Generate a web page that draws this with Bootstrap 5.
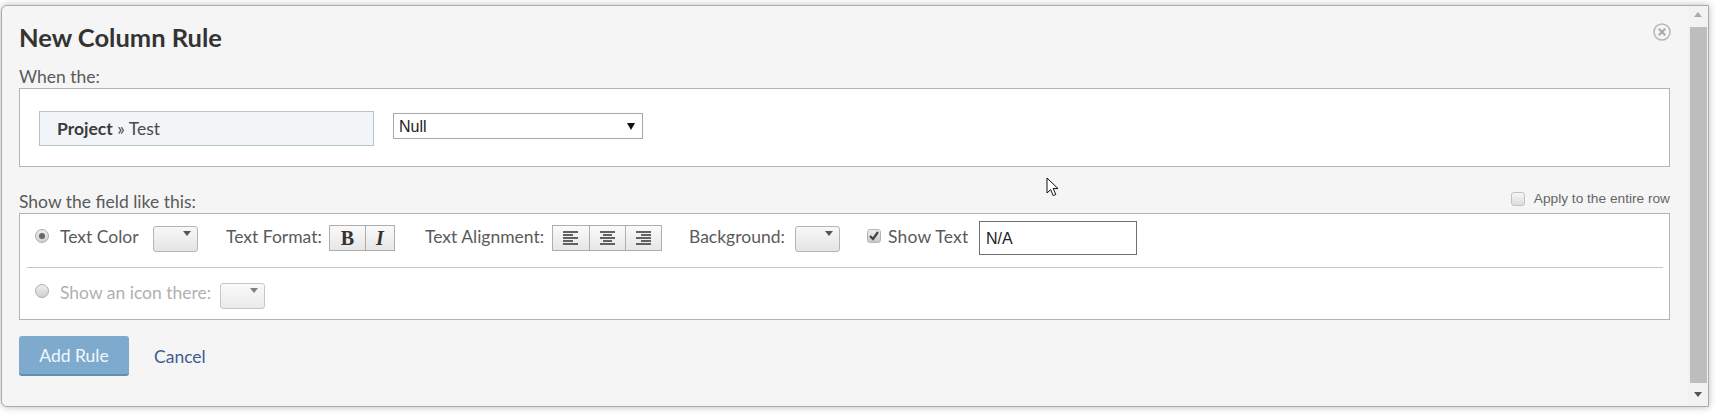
<!DOCTYPE html>
<html lang="en">
<head>
<meta charset="utf-8">
<title>New Column Rule</title>
<link rel="stylesheet" href="https://cdn.jsdelivr.net/npm/bootstrap@5.3.0/dist/css/bootstrap.min.css">
<style>
html, body { width: 1730px; height: 415px; overflow: hidden; background: #fff; }
body { font-family: Lato, "Liberation Sans", sans-serif; font-size: 17.5px; color: #5a5a5a; }
.rule-shell { width: 1708px; height: 402px; margin: 5px 0 0 1px; background: #f5f5f5; border: 1px solid #ababab; border-radius: 6px 0 0 6px; box-shadow: 0 0 7px rgba(0,0,0,.28); position: relative; }
.rule-main { width: 1687px; padding: 0 19px 0 17px; }
.rule-title { font-family: Lato, sans-serif; font-size: 25.5px; font-weight: 700; line-height: 30px; color: #333; margin: 16px 0 0; }
.rule-label { line-height: 20px; margin: 0; }
.rule-label-when { margin-top: 15px; margin-bottom: 1px; }
.rule-panel { background: #fff; border: 1px solid #b4b4b4; }
.rule-panel-when { height: 79px; padding: 22px 0 0 19px; gap: 19px; }
.field-chip { width: 335px; height: 35px; padding-left: 17px; background: #f2f5f7; border: 1px solid #b6c3c9; line-height: 33px; color: #4a4a4a; }
.field-chip b { color: #3b3b3b; }
.null-select { width: 250px; height: 26px; margin-top: 2px; padding: 0 0 0 5px; font: 16px "Liberation Sans", sans-serif; color: #222; border: 1px solid #a9a9a9; border-radius: 0; background: #fff url("data:image/svg+xml,%3Csvg xmlns='http://www.w3.org/2000/svg' width='8' height='8'%3E%3Cpath d='M0 1h8L4 8z' fill='%23111'/%3E%3C/svg%3E") no-repeat right 7px center; appearance: none; }
.show-head { margin-top: 24px; height: 22px; }
.show-head .rule-label { line-height: 22px; margin-top: -1px; }
.apply-wrap { font: 13.7px "Liberation Sans", sans-serif; color: #666; gap: 9px; margin-top: -7px; }
.tick { width: 14px; height: 14px; flex: none; border: 1px solid #c2c2c2; border-radius: 3px; background: linear-gradient(#f6f6f6, #dcdcdc); display: block; position: relative; }
.tick-on { border-color: #b5b5b5; background: linear-gradient(#eee, #c9c9c9); }
.tick-on svg { display: block; }
.dot { width: 14px; height: 14px; flex: none; border: 1px solid #adadad; border-radius: 50%; background: linear-gradient(#eee, #d0d0d0); display: flex; align-items: center; justify-content: center; }
.dot i { width: 6px; height: 6px; border-radius: 50%; background: #666; }
.rule-panel-show { height: 107px; padding: 0 6px 0 7px; }
.show-row-one { height: 54px; padding-bottom: 6px; border-bottom: 1px solid #c6c6c6; }
.show-row-two { height: 51px; }
.slot-radio { margin: -3px 0 0 8px; }
.show-row-two .slot-radio { margin-top: -6px; }
.swatch-btn { width: 45px; height: 26px; margin-top: 2px; padding: 3px 6px 0 0; background: linear-gradient(#f8f8f8, #e4e4e4); border: 1px solid #b5b5b5; border-radius: 3px; display: flex; justify-content: flex-end; align-items: flex-start; }
.swatch-btn i { width: 0; height: 0; border: 4px solid transparent; border-bottom: 0; border-top: 5px solid #555; margin-top: 1px; }
.swatch-off { opacity: .75; margin-top: 4px; }
.tool-group { display: flex; height: 26px; border: 1px solid #aeaeae; background: linear-gradient(#fafafa, #e6e6e6); }
.tool-btn { width: 36px; display: flex; align-items: center; justify-content: center; border-left: 1px solid #aeaeae; color: #333; }
.tool-btn:first-child { border-left: 0; }
.glyph-serif { font: 700 20px/1 "Liberation Serif", serif; }
.tool-fmt .tool-btn:first-child { width: 35px; }
.tool-fmt .tool-btn:nth-child(2) { width: 29px; }
.gap-text-color { margin-left: 11px; width: 93px; }
.gap-format { margin-left: 28px; width: 103px; }
.gap-align { margin-left: 30px; width: 127px; }
.gap-bg { margin-left: 27px; width: 106px; }
.gap-showtext { margin-left: 27px; }
.muted-line { color: #b0b0b0; }
.showtext-label { margin-left: 7px; width: 91px; letter-spacing: .2px; }
.icon-label { margin-left: 11px; width: 160px; }
.na-input { width: 158px; height: 34px; padding: 2px 6px 0; font: 16px "Liberation Sans", sans-serif; color: #222; border: 1px solid #707070; border-radius: 0; margin-top: 1px; }
.add-btn { width: 110px; height: 40px; padding: 2px 0 0; margin-top: 16px; font-family: Lato, sans-serif; font-size: 17.5px; color: #f2f7fb; background: #7eabcd; border: 0; border-bottom: 2px solid #5f8fb0; border-radius: 3px; }
.cancel-link { margin: 17px 0 0 25px; line-height: 40px; color: #3f5b94; text-decoration: none; }
.close-mark { position: absolute; left: 1650px; top: 16px; }
.fake-scroll { position: absolute; right: 0; top: 0; bottom: 0; width: 20px; background: #f2f2f2; }
.fake-scroll b { position: absolute; left: 2px; right: 1px; top: 21px; bottom: 23px; background: #bdbdbd; }
.fake-scroll i { position: absolute; left: 6px; width: 0; height: 0; border: 4.5px solid transparent; }
.arr-up { top: 6px; border-top: 0 !important; border-bottom: 5px solid #aaa !important; }
.arr-down { bottom: 9px; border-bottom: 0 !important; border-top: 5px solid #555 !important; }
.mouse-mark { position: absolute; left: 1044px; top: 171px; }
</style>
</head>
<body>
<div class="rule-shell">
  <div class="rule-main">
    <h1 class="rule-title">New Column Rule</h1>
    <p class="rule-label rule-label-when">When the:</p>
    <div class="rule-panel rule-panel-when d-flex align-items-start">
      <div class="field-chip"><b>Project</b> » Test</div>
      <select class="null-select"><option>Null</option></select>
    </div>

    <div class="show-head d-flex justify-content-between align-items-center">
      <p class="rule-label">Show the field like this:</p>
      <div class="apply-wrap d-flex align-items-center"><span class="tick"></span><span>Apply to the entire row</span></div>
    </div>

    <div class="rule-panel rule-panel-show">
      <div class="show-row-one d-flex align-items-center">
        <span class="dot slot-radio"><i></i></span>
        <span class="gap-text-color">Text Color</span>
        <span class="swatch-btn"><i></i></span>
        <span class="gap-format">Text Format:</span>
        <div class="tool-group tool-fmt">
          <span class="tool-btn glyph-serif">B</span>
          <span class="tool-btn glyph-serif fst-italic">I</span>
        </div>
        <span class="gap-align">Text Alignment:</span>
        <div class="tool-group">
          <span class="tool-btn"><svg width="16" height="14" viewBox="0 0 16 14"><path d="M0 1h15M0 4h10M0 7h15M0 10h10M0 13h15" stroke="#333" stroke-width="1.6"/></svg></span>
          <span class="tool-btn"><svg width="16" height="14" viewBox="0 0 16 14"><path d="M0 1h15M3 4h9M0 7h15M3 10h9M0 13h15" stroke="#333" stroke-width="1.6"/></svg></span>
          <span class="tool-btn"><svg width="16" height="14" viewBox="0 0 16 14"><path d="M0 1h15M5 4h10M0 7h15M5 10h10M0 13h15" stroke="#333" stroke-width="1.6"/></svg></span>
        </div>
        <span class="gap-bg">Background:</span>
        <span class="swatch-btn"><i></i></span>
        <span class="tick tick-on gap-showtext slot-radio"><svg width="12" height="12" viewBox="0 0 12 12"><path d="M2 6l3 3 5-7" fill="none" stroke="#444" stroke-width="2.2"/></svg></span>
        <span class="showtext-label">Show Text</span>
        <input class="na-input" type="text" value="N/A">
      </div>
      <div class="show-row-two d-flex align-items-center muted-line">
        <span class="dot slot-radio"></span>
        <span class="icon-label">Show an icon there:</span>
        <span class="swatch-btn swatch-off"><i></i></span>
      </div>
    </div>

    <div class="d-flex align-items-start">
      <button class="btn add-btn" type="button">Add Rule</button>
      <a class="cancel-link" href="#">Cancel</a>
    </div>
  </div>

  <svg class="close-mark" width="20" height="20" viewBox="0 0 20 20"><circle cx="10" cy="10" r="8" fill="none" stroke="#b5b5b5" stroke-width="1.5"/><path d="M6.8 6.8l6.4 6.4M13.2 6.8l-6.4 6.4" stroke="#aaa" stroke-width="2.2"/></svg>
  <div class="fake-scroll"><i class="arr-up"></i><b></b><i class="arr-down"></i></div>
  <svg class="mouse-mark" width="14" height="21" viewBox="0 0 14 21"><path d="M1 1v15l3.6-3.4 2.6 6 2.6-1.1-2.6-5.9H12z" fill="#fff" stroke="#111" stroke-width="1"/></svg>
</div>
<script src="https://cdn.jsdelivr.net/npm/bootstrap@5.3.0/dist/js/bootstrap.bundle.min.js"></script>
</body>
</html>
